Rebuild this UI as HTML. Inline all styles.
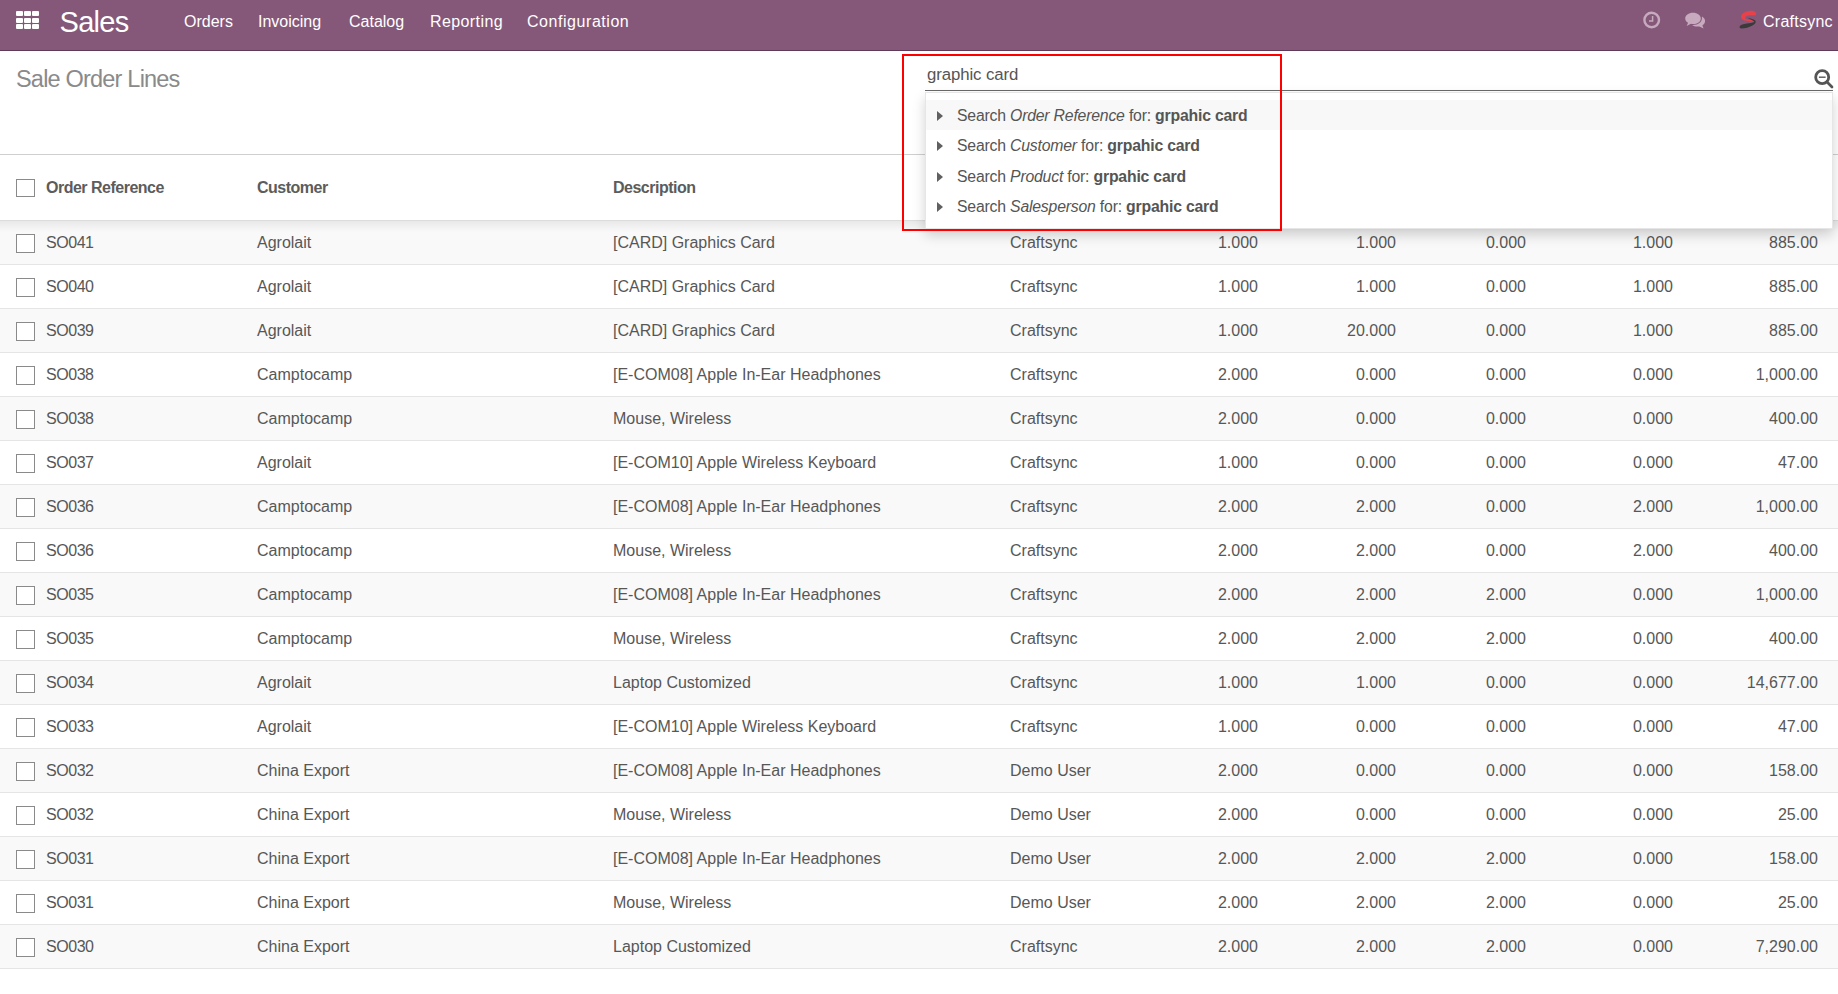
<!DOCTYPE html>
<html><head><meta charset="utf-8">
<style>
*{box-sizing:border-box}
html,body{margin:0;padding:0}
body{width:1838px;height:994px;overflow:hidden;background:#fff;position:relative;font-family:"Liberation Sans",sans-serif;color:#4c4c4c}
.nav{position:absolute;left:0;top:0;width:1838px;height:51px;background:#85587a;border-bottom:1px solid #623a59}
.nav .txt{position:absolute;color:#fff;white-space:nowrap;font-size:16px;line-height:1}
.grid{position:absolute;left:16px;top:11.2px;width:23px;height:18px}
.grid i{position:absolute;width:7px;height:5px;background:#fff;border-radius:1px}
.title{position:absolute;left:16px;top:67.5px;font-size:23.5px;letter-spacing:-0.8px;color:#8a8a8a;white-space:nowrap;line-height:1}
.hline{position:absolute;left:0;top:154px;width:1838px;height:1px;background:#cfcfcf}
.thead{position:absolute;left:0;top:155px;width:1838px;height:66px;border-bottom:1px solid #dcdcdc}
.th{position:absolute;top:25px;font-size:16px;letter-spacing:-0.5px;font-weight:bold;color:#5c5c5c;white-space:nowrap;line-height:1}
.cb{position:absolute;left:16px;width:19px;height:19px;border:1px solid #8a8a8a;background:#fff}
.row{position:absolute;left:0;width:1838px;height:44px;border-bottom:1px solid #e5e5e5}
.shadow{position:absolute;left:0;top:221px;width:1838px;height:11px;background:linear-gradient(rgba(0,0,0,0.065),rgba(0,0,0,0))}
.row.odd{background:#f9f9f9}
.t{position:absolute;top:14px;font-size:16px;white-space:nowrap;line-height:1;color:#575757}
.t.r{text-align:right}
.redbox{position:absolute;left:902px;top:54px;width:380px;height:177px;border:2px solid #ff0000}
.search{position:absolute;left:925px;top:90px;width:908px;height:1px;background:#6b6b6b}
.stext{position:absolute;left:927px;top:67.2px;font-size:16.8px;letter-spacing:-0.1px;color:#555;white-space:nowrap;line-height:1}
.dd{position:absolute;left:925px;top:92px;width:908px;height:137px;background:#fff;border:1px solid #e6e6e6;box-shadow:0 6px 12px rgba(0,0,0,.175)}
.dd .it{position:absolute;left:0;width:906px;height:30px}
.dd .it.hl{background:#f8f8f8}
.dd .it span{position:absolute;left:31px;top:8px;font-size:15.8px;letter-spacing:-0.2px;white-space:nowrap;line-height:1;color:#555}
.dd .tri{position:absolute;left:11px;top:11px;width:0;height:0;border-left:6px solid #606060;border-top:5px solid transparent;border-bottom:5px solid transparent}
</style></head><body>
<div class="nav">
  <div class="grid">
    <i style="left:0;top:0"></i><i style="left:8px;top:0"></i><i style="left:16px;top:0"></i>
    <i style="left:0;top:6.7px"></i><i style="left:8px;top:6.7px"></i><i style="left:16px;top:6.7px"></i>
    <i style="left:0;top:13px"></i><i style="left:8px;top:13px"></i><i style="left:16px;top:13px"></i>
  </div>
  <span class="txt" style="left:59.5px;top:8.2px;font-size:29px;letter-spacing:-0.7px">Sales</span>
  <span class="txt" style="left:184px;top:14px">Orders</span>
  <span class="txt" style="left:258px;top:14px">Invoicing</span>
  <span class="txt" style="left:349px;top:14px">Catalog</span>
  <span class="txt" style="left:430px;top:14px;letter-spacing:0.4px">Reporting</span>
  <span class="txt" style="left:527px;top:14px;letter-spacing:0.55px">Configuration</span>

  <svg style="position:absolute;left:1640px;top:8px" width="24" height="24" viewBox="0 0 24 24">
    <circle cx="11.7" cy="12" r="7.3" fill="none" stroke="#c7aabe" stroke-width="2.4"/>
    <path d="M12.6 8 V13 H9" fill="none" stroke="#c7aabe" stroke-width="1.5"/>
  </svg>
  <svg style="position:absolute;left:1684px;top:11px" width="24" height="20" viewBox="0 0 24 20">
    <path d="M9 1.8 C4.6 1.8 1.2 4.3 1.2 7.4 C1.2 9.2 2.3 10.8 4.1 11.8 L2.6 15 L7 12.8 C7.6 12.9 8.3 13 9 13 C13.4 13 16.8 10.5 16.8 7.4 C16.8 4.3 13.4 1.8 9 1.8 Z" fill="#c7aabe"/>
    <path d="M18 5.5 C19.9 6.6 21.1 8.2 21.1 10 C21.1 11.8 20 13.4 18.4 14.4 L19.6 17.4 L15.4 15.4 C14.8 15.5 14.2 15.6 13.6 15.6 C11.4 15.6 9.5 14.9 8.2 13.9 C8.5 13.9 8.7 13.9 9 13.9 C13.9 13.9 17.9 11 17.9 7.4 C17.9 6.7 17.9 6.1 18 5.5 Z" fill="#c7aabe"/>
  </svg>
  <svg style="position:absolute;left:1738px;top:10px" width="20" height="20" viewBox="0 0 20 20">
    <path d="M17.9 2.6 C16 0.9 13.2 0.7 11.2 0.9 C7.4 1.3 3.6 3.2 3.1 6.2 C2.9 8.2 4.2 9.4 6 10.2 C9.6 11.2 14.4 11.3 18.2 11.7 C16 10.4 13.4 10.1 11.4 9.8 C9.2 9.5 7.2 9.2 7.1 8.1 C7.2 6.3 9.2 5.6 11.8 5.3 C13.8 5.1 16.2 5.2 17.9 5.3 Z" fill="#e8414a"/>
    <path d="M9.4 7.8 C12.6 8.4 16.2 9.2 17.5 10.8 C18.3 12.4 17.2 14.3 14 15.8 C11.2 17.3 7.2 18.6 3.6 18.6 C2 18.6 1.2 17.8 1.6 16.6 C2.4 14.8 5.6 14 8.6 13.6 C11.4 13.2 14.6 12.9 16.4 12 C15.2 10.2 11.8 9.2 9.4 7.8 Z" fill="#3a3a3a"/>
  </svg>
  <span class="txt" style="left:1763px;top:14px;letter-spacing:0.25px">Craftsync</span>
</div>
<div class="title">Sale Order Lines</div>
<div class="hline"></div>
<div class="thead">
  <div class="cb" style="top:24px;height:18px"></div>
  <span class="th" style="left:46px">Order Reference</span>
  <span class="th" style="left:257px">Customer</span>
  <span class="th" style="left:613px">Description</span>
</div>
<div class="row odd" style="top:221px"><div class="cb" style="top:13px"></div><span class="t" style="left:46px;letter-spacing:-0.45px">SO041</span><span class="t" style="left:257px">Agrolait</span><span class="t" style="left:613px">[CARD] Graphics Card</span><span class="t" style="left:1010px">Craftsync</span><span class="t r" style="right:580px">1.000</span><span class="t r" style="right:442px">1.000</span><span class="t r" style="right:312px">0.000</span><span class="t r" style="right:165px">1.000</span><span class="t r" style="right:20px">885.00</span></div>
<div class="row" style="top:265px"><div class="cb" style="top:13px"></div><span class="t" style="left:46px;letter-spacing:-0.45px">SO040</span><span class="t" style="left:257px">Agrolait</span><span class="t" style="left:613px">[CARD] Graphics Card</span><span class="t" style="left:1010px">Craftsync</span><span class="t r" style="right:580px">1.000</span><span class="t r" style="right:442px">1.000</span><span class="t r" style="right:312px">0.000</span><span class="t r" style="right:165px">1.000</span><span class="t r" style="right:20px">885.00</span></div>
<div class="row odd" style="top:309px"><div class="cb" style="top:13px"></div><span class="t" style="left:46px;letter-spacing:-0.45px">SO039</span><span class="t" style="left:257px">Agrolait</span><span class="t" style="left:613px">[CARD] Graphics Card</span><span class="t" style="left:1010px">Craftsync</span><span class="t r" style="right:580px">1.000</span><span class="t r" style="right:442px">20.000</span><span class="t r" style="right:312px">0.000</span><span class="t r" style="right:165px">1.000</span><span class="t r" style="right:20px">885.00</span></div>
<div class="row" style="top:353px"><div class="cb" style="top:13px"></div><span class="t" style="left:46px;letter-spacing:-0.45px">SO038</span><span class="t" style="left:257px">Camptocamp</span><span class="t" style="left:613px">[E-COM08] Apple In-Ear Headphones</span><span class="t" style="left:1010px">Craftsync</span><span class="t r" style="right:580px">2.000</span><span class="t r" style="right:442px">0.000</span><span class="t r" style="right:312px">0.000</span><span class="t r" style="right:165px">0.000</span><span class="t r" style="right:20px">1,000.00</span></div>
<div class="row odd" style="top:397px"><div class="cb" style="top:13px"></div><span class="t" style="left:46px;letter-spacing:-0.45px">SO038</span><span class="t" style="left:257px">Camptocamp</span><span class="t" style="left:613px">Mouse, Wireless</span><span class="t" style="left:1010px">Craftsync</span><span class="t r" style="right:580px">2.000</span><span class="t r" style="right:442px">0.000</span><span class="t r" style="right:312px">0.000</span><span class="t r" style="right:165px">0.000</span><span class="t r" style="right:20px">400.00</span></div>
<div class="row" style="top:441px"><div class="cb" style="top:13px"></div><span class="t" style="left:46px;letter-spacing:-0.45px">SO037</span><span class="t" style="left:257px">Agrolait</span><span class="t" style="left:613px">[E-COM10] Apple Wireless Keyboard</span><span class="t" style="left:1010px">Craftsync</span><span class="t r" style="right:580px">1.000</span><span class="t r" style="right:442px">0.000</span><span class="t r" style="right:312px">0.000</span><span class="t r" style="right:165px">0.000</span><span class="t r" style="right:20px">47.00</span></div>
<div class="row odd" style="top:485px"><div class="cb" style="top:13px"></div><span class="t" style="left:46px;letter-spacing:-0.45px">SO036</span><span class="t" style="left:257px">Camptocamp</span><span class="t" style="left:613px">[E-COM08] Apple In-Ear Headphones</span><span class="t" style="left:1010px">Craftsync</span><span class="t r" style="right:580px">2.000</span><span class="t r" style="right:442px">2.000</span><span class="t r" style="right:312px">0.000</span><span class="t r" style="right:165px">2.000</span><span class="t r" style="right:20px">1,000.00</span></div>
<div class="row" style="top:529px"><div class="cb" style="top:13px"></div><span class="t" style="left:46px;letter-spacing:-0.45px">SO036</span><span class="t" style="left:257px">Camptocamp</span><span class="t" style="left:613px">Mouse, Wireless</span><span class="t" style="left:1010px">Craftsync</span><span class="t r" style="right:580px">2.000</span><span class="t r" style="right:442px">2.000</span><span class="t r" style="right:312px">0.000</span><span class="t r" style="right:165px">2.000</span><span class="t r" style="right:20px">400.00</span></div>
<div class="row odd" style="top:573px"><div class="cb" style="top:13px"></div><span class="t" style="left:46px;letter-spacing:-0.45px">SO035</span><span class="t" style="left:257px">Camptocamp</span><span class="t" style="left:613px">[E-COM08] Apple In-Ear Headphones</span><span class="t" style="left:1010px">Craftsync</span><span class="t r" style="right:580px">2.000</span><span class="t r" style="right:442px">2.000</span><span class="t r" style="right:312px">2.000</span><span class="t r" style="right:165px">0.000</span><span class="t r" style="right:20px">1,000.00</span></div>
<div class="row" style="top:617px"><div class="cb" style="top:13px"></div><span class="t" style="left:46px;letter-spacing:-0.45px">SO035</span><span class="t" style="left:257px">Camptocamp</span><span class="t" style="left:613px">Mouse, Wireless</span><span class="t" style="left:1010px">Craftsync</span><span class="t r" style="right:580px">2.000</span><span class="t r" style="right:442px">2.000</span><span class="t r" style="right:312px">2.000</span><span class="t r" style="right:165px">0.000</span><span class="t r" style="right:20px">400.00</span></div>
<div class="row odd" style="top:661px"><div class="cb" style="top:13px"></div><span class="t" style="left:46px;letter-spacing:-0.45px">SO034</span><span class="t" style="left:257px">Agrolait</span><span class="t" style="left:613px">Laptop Customized</span><span class="t" style="left:1010px">Craftsync</span><span class="t r" style="right:580px">1.000</span><span class="t r" style="right:442px">1.000</span><span class="t r" style="right:312px">0.000</span><span class="t r" style="right:165px">0.000</span><span class="t r" style="right:20px">14,677.00</span></div>
<div class="row" style="top:705px"><div class="cb" style="top:13px"></div><span class="t" style="left:46px;letter-spacing:-0.45px">SO033</span><span class="t" style="left:257px">Agrolait</span><span class="t" style="left:613px">[E-COM10] Apple Wireless Keyboard</span><span class="t" style="left:1010px">Craftsync</span><span class="t r" style="right:580px">1.000</span><span class="t r" style="right:442px">0.000</span><span class="t r" style="right:312px">0.000</span><span class="t r" style="right:165px">0.000</span><span class="t r" style="right:20px">47.00</span></div>
<div class="row odd" style="top:749px"><div class="cb" style="top:13px"></div><span class="t" style="left:46px;letter-spacing:-0.45px">SO032</span><span class="t" style="left:257px">China Export</span><span class="t" style="left:613px">[E-COM08] Apple In-Ear Headphones</span><span class="t" style="left:1010px">Demo User</span><span class="t r" style="right:580px">2.000</span><span class="t r" style="right:442px">0.000</span><span class="t r" style="right:312px">0.000</span><span class="t r" style="right:165px">0.000</span><span class="t r" style="right:20px">158.00</span></div>
<div class="row" style="top:793px"><div class="cb" style="top:13px"></div><span class="t" style="left:46px;letter-spacing:-0.45px">SO032</span><span class="t" style="left:257px">China Export</span><span class="t" style="left:613px">Mouse, Wireless</span><span class="t" style="left:1010px">Demo User</span><span class="t r" style="right:580px">2.000</span><span class="t r" style="right:442px">0.000</span><span class="t r" style="right:312px">0.000</span><span class="t r" style="right:165px">0.000</span><span class="t r" style="right:20px">25.00</span></div>
<div class="row odd" style="top:837px"><div class="cb" style="top:13px"></div><span class="t" style="left:46px;letter-spacing:-0.45px">SO031</span><span class="t" style="left:257px">China Export</span><span class="t" style="left:613px">[E-COM08] Apple In-Ear Headphones</span><span class="t" style="left:1010px">Demo User</span><span class="t r" style="right:580px">2.000</span><span class="t r" style="right:442px">2.000</span><span class="t r" style="right:312px">2.000</span><span class="t r" style="right:165px">0.000</span><span class="t r" style="right:20px">158.00</span></div>
<div class="row" style="top:881px"><div class="cb" style="top:13px"></div><span class="t" style="left:46px;letter-spacing:-0.45px">SO031</span><span class="t" style="left:257px">China Export</span><span class="t" style="left:613px">Mouse, Wireless</span><span class="t" style="left:1010px">Demo User</span><span class="t r" style="right:580px">2.000</span><span class="t r" style="right:442px">2.000</span><span class="t r" style="right:312px">2.000</span><span class="t r" style="right:165px">0.000</span><span class="t r" style="right:20px">25.00</span></div>
<div class="row odd" style="top:925px"><div class="cb" style="top:13px"></div><span class="t" style="left:46px;letter-spacing:-0.45px">SO030</span><span class="t" style="left:257px">China Export</span><span class="t" style="left:613px">Laptop Customized</span><span class="t" style="left:1010px">Craftsync</span><span class="t r" style="right:580px">2.000</span><span class="t r" style="right:442px">2.000</span><span class="t r" style="right:312px">2.000</span><span class="t r" style="right:165px">0.000</span><span class="t r" style="right:20px">7,290.00</span></div>
<div class="shadow"></div>
<div class="stext">graphic card</div>
<div class="search"></div>
<svg style="position:absolute;left:1810px;top:66px" width="26" height="26" viewBox="0 0 26 26">
  <circle cx="12.2" cy="11.2" r="6.5" fill="none" stroke="#555" stroke-width="2.8"/>
  <path d="M8.9 11.2 H15.6" stroke="#555" stroke-width="1.4"/>
  <path d="M16.8 15.8 L22 21" stroke="#555" stroke-width="2.7" stroke-linecap="round"/>
</svg>

<div class="dd">
  <div class="it hl" style="top:7px"><i class="tri"></i><span>Search <i>Order Reference</i> for: <b>grpahic card</b></span></div>
  <div class="it" style="top:37px"><i class="tri"></i><span>Search <i>Customer</i> for: <b>grpahic card</b></span></div>
  <div class="it" style="top:68px"><i class="tri"></i><span>Search <i>Product</i> for: <b>grpahic card</b></span></div>
  <div class="it" style="top:98px"><i class="tri"></i><span>Search <i>Salesperson</i> for: <b>grpahic card</b></span></div>
</div>
<div class="redbox"></div>
</body></html>
